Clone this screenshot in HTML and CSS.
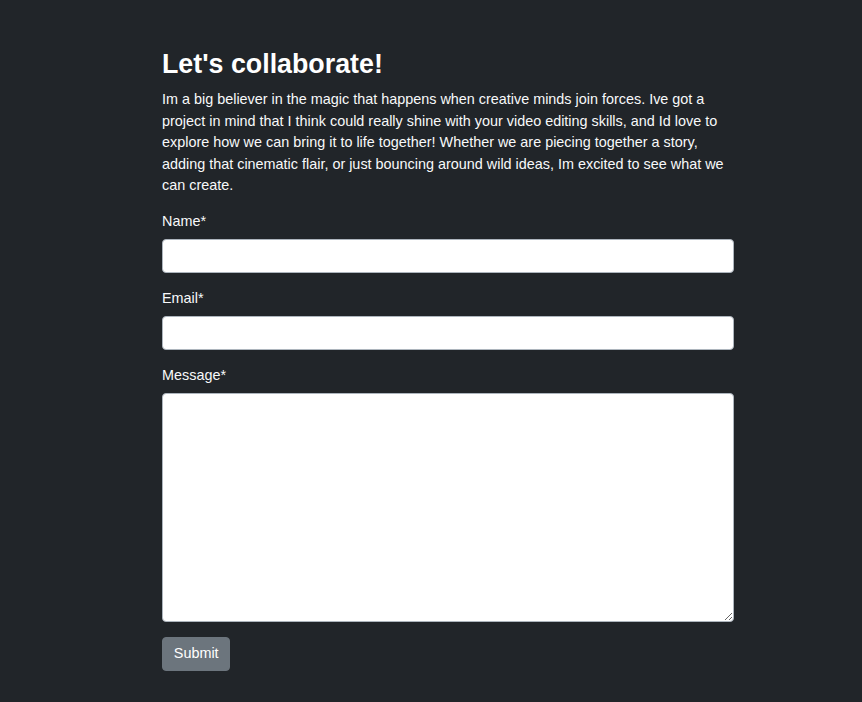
FILE: index.html
```html
<!DOCTYPE html>
<html lang="en">
<head>
<meta charset="utf-8">
<title>Let's collaborate!</title>
<link rel="stylesheet" href="styles.css">
</head>
<body>
<main class="container">
  <h2 class="title">Let's collaborate!</h2>
  <p class="intro">Im a big believer in the magic that happens when creative minds join forces. Ive got a project in mind that I think could really shine with your video editing skills, and Id love to explore how we can bring it to life together! Whether we are piecing together a story, adding that cinematic flair, or just bouncing around wild ideas, Im excited to see what we can create.</p>
  <form class="form">
    <div class="field">
      <label class="label" for="name">Name*</label>
      <input class="control" id="name" type="text">
    </div>
    <div class="field">
      <label class="label" for="email">Email*</label>
      <input class="control" id="email" type="email">
    </div>
    <div class="field">
      <label class="label" for="message">Message*</label>
      <textarea class="control area" id="message"></textarea>
    </div>
    <button class="btn" type="button">Submit</button>
  </form>
</main>
</body>
</html>
```
FILE: styles.css
```css
html, body {
  margin: 0;
  padding: 0;
  background: #212529;
}
body {
  font-family: "Liberation Sans", Arial, sans-serif;
  font-size: 14.4px;
  line-height: 21.6px;
  color: #f8f9fa;
}
.container {
  width: 572px;
  margin-left: 162px;
  padding-top: 47px;
}
.title {
  margin: 0 0 8px;
  font-size: 26.8px;
  line-height: 34px;
  font-weight: 700;
  color: #fff;
}
.intro {
  margin: 0 0 14px;
}
.form {
  display: flex;
  flex-direction: column;
  align-items: flex-start;
}
.field {
  width: 100%;
  margin-bottom: 15px;
}
.label {
  display: block;
  margin-bottom: 6px;
}
.control {
  display: block;
  box-sizing: border-box;
  width: 100%;
  height: 34.4px;
  padding: 5.4px 10.8px;
  font: inherit;
  color: #212529;
  background: #fff;
  border: 1px solid #adb5bd;
  border-radius: 4px;
}
.area {
  height: 229px;
  resize: vertical;
}
.btn {
  height: 34.4px;
  padding: 5.4px 10.8px;
  font: inherit;
  color: #fff;
  background: #6c757d;
  border: 1px solid #6c757d;
  border-radius: 4px;
}
```
